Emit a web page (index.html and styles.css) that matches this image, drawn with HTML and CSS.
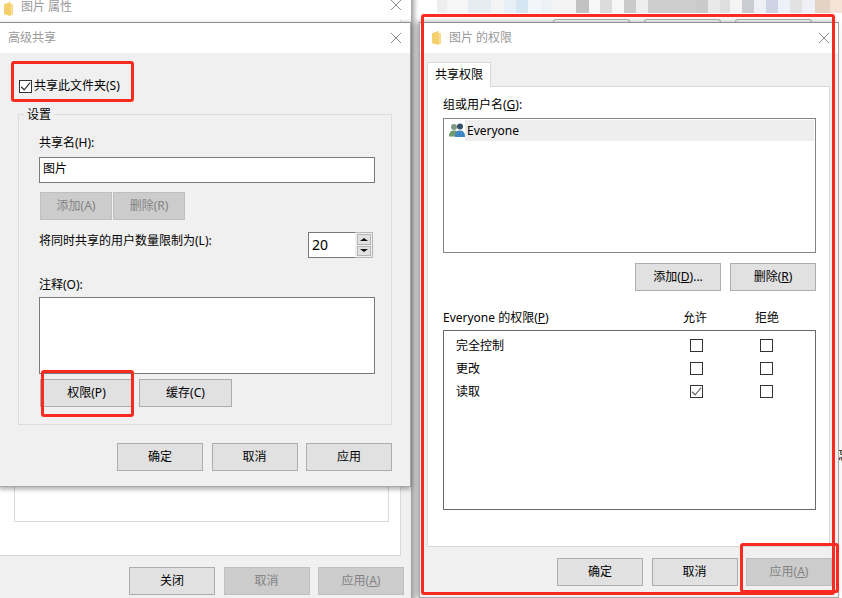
FILE: index.html
```html
<!DOCTYPE html>
<html lang="zh-CN">
<head>
<meta charset="utf-8">
<title>图片 的权限</title>
<link rel="stylesheet" href="styles.css">
</head>
<body>
<div class="desktop">
  <div class="strip"></div>
  <div class="back-tabs"><i></i><i></i><i></i></div>
  <span class="fragment">忘</span>

  <section class="window back">
    <header class="back-title">
      <svg class="folder" viewBox="0 0 10 14"><path d="M1 2.5 7.5 0v2H10v11H7.5v1L1 12z" fill="#f8dc8c"/><path d="M1 2.5 7.5 0v14L1 12z" fill="#f5cf6b"/></svg>
      <span class="title-text">图片 属性</span>
      <svg class="close" viewBox="0 0 10 10"><path d="M0 0 10 10M10 0 0 10"/></svg>
    </header>
    <div class="back-panel"><div class="back-inner"></div></div>
    <footer class="actions back-actions">
      <button class="btn">关闭</button>
      <button class="btn off">取消</button>
      <button class="btn off">应用(<u>A</u>)</button>
    </footer>
  </section>

  <section class="window advanced">
    <header class="titlebar">
      <span class="title-text">高级共享</span>
      <svg class="close" viewBox="0 0 10 10"><path d="M0 0 10 10M10 0 0 10"/></svg>
    </header>
    <div class="share-row">
      <span class="check dark"><svg viewBox="0 0 10 10"><path d="M1 5.2 3.8 8 9.2 1.4"/></svg></span>
      <span>共享此文件夹(S)</span>
    </div>
    <div class="group">
      <span class="legend">设置</span>
      <div class="line">共享名(H):</div>
      <div class="field name">图片</div>
      <div class="btn-row tight">
        <button class="btn off small">添加(A)</button>
        <button class="btn off small">删除(R)</button>
      </div>
      <div class="limit">
        <span>将同时共享的用户数量限制为(L):</span>
        <div class="spin">
          <span class="spin-value">20</span>
          <div class="spin-btns">
            <span class="spin-btn"><i class="up"></i></span>
            <span class="spin-btn"><i class="down"></i></span>
          </div>
        </div>
      </div>
      <div class="line note">注释(O):</div>
      <div class="field comment"></div>
      <div class="btn-row wide">
        <button class="btn mid">权限(P)</button>
        <button class="btn mid">缓存(C)</button>
      </div>
    </div>
    <footer class="actions adv-actions">
      <button class="btn">确定</button>
      <button class="btn">取消</button>
      <button class="btn">应用</button>
    </footer>
  </section>

  <section class="window perms">
    <header class="titlebar">
      <svg class="folder" viewBox="0 0 10 14"><path d="M1 2.5 7.5 0v2H10v11H7.5v1L1 12z" fill="#f8dc8c"/><path d="M1 2.5 7.5 0v14L1 12z" fill="#f5cf6b"/></svg>
      <span class="title-text">图片 的权限</span>
      <svg class="close" viewBox="0 0 10 10"><path d="M0 0 10 10M10 0 0 10"/></svg>
    </header>
    <div class="tab">共享权限</div>
    <div class="panel">
      <div class="line">组或用户名(<u>G</u>):</div>
      <div class="listbox">
        <div class="list-row">
          <svg class="users" viewBox="0 0 16 16">
            <circle cx="5" cy="5" r="3" fill="#7f9a82"/><path d="M0 14.500c0-4.500 2-6 5-6s5 1.500 5 6z" fill="#6f9a70"/>
            <circle cx="11" cy="4.500" r="3" fill="#34536b"/><path d="M6 15c0-5 2-6.500 5-6.500s5 1.500 5 6.500z" fill="#3f86c4"/>
          </svg>
          <span class="list-name">Everyone</span>
        </div>
      </div>
      <div class="list-actions">
        <button class="btn">添加(<u>D</u>)...</button>
        <button class="btn">删除(<u>R</u>)</button>
      </div>
      <div class="perm-head">
        <span>Everyone 的权限(<u>P</u>)</span>
        <span>允许</span>
        <span></span>
        <span>拒绝</span>
      </div>
      <div class="perm-box">
        <div class="perm-row"><span>完全控制</span><span class="check"></span><span></span><span class="check"></span></div>
        <div class="perm-row"><span>更改</span><span class="check"></span><span></span><span class="check"></span></div>
        <div class="perm-row"><span>读取</span><span class="check grey"><svg viewBox="0 0 10 10"><path d="M1 5.200 3.800 8 9.200 1.400"/></svg></span><span></span><span class="check"></span></div>
      </div>
    </div>
    <footer class="actions perm-actions">
      <button class="btn">确定</button>
      <button class="btn">取消</button>
      <button class="btn off">应用(<u>A</u>)</button>
    </footer>
  </section>

  <div class="mark mark-share"></div>
  <div class="mark mark-perm"></div>
  <div class="mark mark-window"></div>
  <div class="mark mark-apply"></div>
</div>
</body>
</html>
```
FILE: styles.css
```css
* { box-sizing: border-box; }
html, body { margin: 0; padding: 0; }
body {
  width: 842px;
  height: 598px;
  overflow: hidden;
  background: #fff;
  font: 12px/16px "Noto Sans", "Noto Sans CJK SC", sans-serif;
  color: #000;
}
u { text-underline-offset: 1px; }
.desktop { position: relative; width: 842px; height: 598px; overflow: hidden; }

.strip {
  position: absolute; left: 410px; top: 0; width: 432px; height: 13px;
  background: linear-gradient(to right,
    #fff 0 27px, #eee 27px 37px, #f6f6f6 37px 58px, #e7ecf2 58px 81px, #f4f4f4 81px 94px,
    #e7eff7 94px 106px, #d5e5f1 106px 118px, #f3f6f9 118px 131px, #ebf1f7 131px 142px,
    #f3f3f3 142px 166px, #c2c2c2 166px 179px, #f8f8f8 179px 190px, #dcdcdc 190px 202px,
    #f6f6f6 202px 214px, #cacaca 214px 226px, #ededed 226px 238px, #cecece 238px 286px,
    #cacaca 286px 298px, #e9e9e9 298px 310px, #dedede 310px 320px, #f4f4f4 320px 332px,
    #cbccd2 332px 344px, #eef0f6 344px 356px, #ced4e3 356px 368px, #eef1f8 368px 380px,
    #e2e2e2 380px 392px, #eef0f5 392px 405px, #e4d3c3 405px 420px, #f5e3d8 420px 432px);
}
.back-tabs {
  position: absolute; left: 553px; top: 19px; display: flex; gap: 14px;
}
.back-tabs i {
  display: block; width: 77px; height: 6px;
  border: 1px solid #b9b9b9; border-bottom: 0; border-radius: 3px 3px 0 0;
}
.fragment { position: absolute; left: 838px; top: 448px; }

.window { position: absolute; background: #f0f0f0; }
.back {
  left: -1px; top: -6px; width: 413px; height: 610px;
  display: flex; flex-direction: column;
  border-right: 1px solid #a9a9a9;
  box-shadow: 2px 0 5px rgba(0,0,0,.4);
}
.back-title {
  height: 26px; background: #fff; padding: 0 10px 5px 4px;
  display: flex; align-items: flex-end; flex: none;
}
.back-title .close { margin-bottom: 5px; }
.back-title .folder { margin-bottom: -1px; }
.back-panel {
  width: 402px; height: 536px; background: #fff; border-bottom: 1px solid #d9d9d9; border-right: 1px solid #d9d9d9;
  padding: 0 0 33px 15px;
  display: flex; align-items: flex-end;
}
.back-inner { width: 375px; height: 60px; border: 1px solid #d9d9d9; border-top: 0; }
.back-actions { padding-right: 7px; margin-top: 11px; gap: 8.5px; }

.advanced {
  left: -1px; top: 22px; width: 412px; height: 465px;
  border: 1px solid #a9a9a9; border-top-color: #8f8f8f;
  box-shadow: 0 2px 5px rgba(0,0,0,.35);
}
.perms {
  left: 419px; top: 22px; width: 420px; height: 576px;
  border: 1px solid #a9a9a9; border-top-color: #8f8f8f;
  box-shadow: -3px 0 6px rgba(0,0,0,.35);
}

.titlebar {
  height: 30px; background: #fff; display: flex; align-items: center; padding: 0 9px 0 8px;
}
.title-text { color: #9a9a9a; font-size: 12px; flex: 1; }
.close { width: 10px; height: 10px; flex: none; }
.close path { stroke: #7f7f7f; stroke-width: .9; fill: none; }
.folder { width: 10px; height: 14px; flex: none; margin-right: 8px; }
.perms .titlebar { padding: 0 9px 0 11px; }

.share-row {
  display: flex; align-items: center; gap: 2px;
  margin: 25px 0 0 19px; height: 16px;
}
.check {
  display: block; width: 13px; height: 13px; background: #fff; border: 1px solid #333;
  position: relative;
}
.check svg { display: block; width: 11px; height: 11px; }
.check path { fill: none; stroke: #444; stroke-width: 1.1; }
.check.grey path { stroke: #6a6a6a; }
.check.dark path { stroke: #333; }

.group {
  position: relative;
  margin: 20px 0 0 18px; width: 374px; height: 311px;
  border: 1px solid #dcdcdc;
  padding: 20px 0 0 20px;
}
.legend {
  position: absolute; left: 5px; top: -8px; padding: 0 3px; background: #f0f0f0;
}
.line { height: 16px; white-space: nowrap; }
.field { background: #fff; border: 1px solid #7a7a7a; width: 336px; margin-top: 6px; }
.field.name { height: 26px; padding: 3px 0 0 3px; }
.field.comment { height: 77px; margin-top: 4px; }
.btn-row { display: flex; margin-left: 1px; }
.btn-row.tight { gap: 1px; margin-top: 9px; }
.btn-row.wide { gap: 6px; margin-top: 5px; }
.limit {
  display: flex; justify-content: space-between; width: 334px; height: 26px; margin-top: 12px; line-height: 18px;
}
.note { margin-top: 19px; }

.btn {
  width: 86px; height: 28px; padding: 0; margin: 0; flex: none;
  background: #e1e1e1; border: 1px solid #adadad; color: #000;
  font: inherit; line-height: 24px; text-align: center;
}
.btn.off { background: #cccccc; border-color: #bfbfbf; color: #838383; }
.btn.small { width: 72px; }
.btn.mid { width: 93px; }

.spin {
  width: 65px; height: 26px; display: flex; background: #fff;
  border: 1px solid #7a7a7a; border-right-color: #b5b5b5;
}
.spin-value { flex: 1; font-size: 14px; line-height: 23px; padding-left: 3px; }
.spin-btns {
  width: 18px; margin: -1px -1px -1px 0; border: 1px solid #b5b5b5; border-left: 0; background: #f0f0f0;
  padding: 1px 1px 1px 2px; display: flex; flex-direction: column; gap: 1px;
}
.spin-btn {
  flex: 1; background: #e1e1e1; border: 1px solid #b5b5b5;
  display: flex; align-items: center; justify-content: center;
}
.spin-btn i { display: block; width: 0; height: 0; border-left: 4px solid transparent; border-right: 4px solid transparent; }
.spin-btn .up { border-bottom: 3px solid #111; }
.spin-btn .down { border-top: 3px solid #111; }

.actions { display: flex; justify-content: flex-end; }
.adv-actions { gap: 8.5px; margin-top: 18px; padding-right: 18px; }
.perm-actions { gap: 8.5px; margin-top: 11px; padding-right: 6px; }

.tab {
  position: relative; z-index: 1;
  width: 64px; height: 25px; margin: 9px 0 -1px 7px;
  background: #fff; border: 1px solid #d9d9d9; border-bottom: 0;
  text-align: center; line-height: 23px;
}
.panel {
  width: 403px; height: 461px; margin-left: 7px; background: #fff;
  border: 1px solid #d9d9d9; padding: 10px 0 0 15px;
}
.listbox {
  width: 373px; height: 135px; margin-top: 5px; background: #fff;
  border: 1px solid #82858a; padding: 1px 1px 0 5px;
}
.list-row { display: flex; height: 21px; }
.users { width: 16px; height: 16px; flex: none; margin-top: 2px; }
.list-name { flex: 1; background: #eeeeee; padding-left: 2px; line-height: 21px; }
.list-actions { display: flex; justify-content: flex-end; gap: 9px; width: 373px; margin-top: 10px; }
.perm-head {
  display: grid; grid-template-columns: 240px 24px 48px 24px; height: 16px; margin-top: 19px; white-space: nowrap;
}
.perm-box {
  width: 373px; height: 180px; margin-top: 4px; border: 1px solid #696969; padding: 3px 0 0 12px;
}
.perm-row {
  display: grid; grid-template-columns: 234px 13px 57px 13px; height: 23px; align-items: center;
}

.mark {
  position: absolute; border: 3px solid #fb2a20; border-radius: 3px; pointer-events: none;
}
.mark-share { left: 11px; top: 61px; width: 123px; height: 41px; }
.mark-perm { left: 41px; top: 370px; width: 93px; height: 47px; }
.mark-window { left: 421px; top: 14px; width: 414px; height: 581px; }
.mark-apply { left: 740px; top: 543px; width: 99px; height: 50px; }
```
